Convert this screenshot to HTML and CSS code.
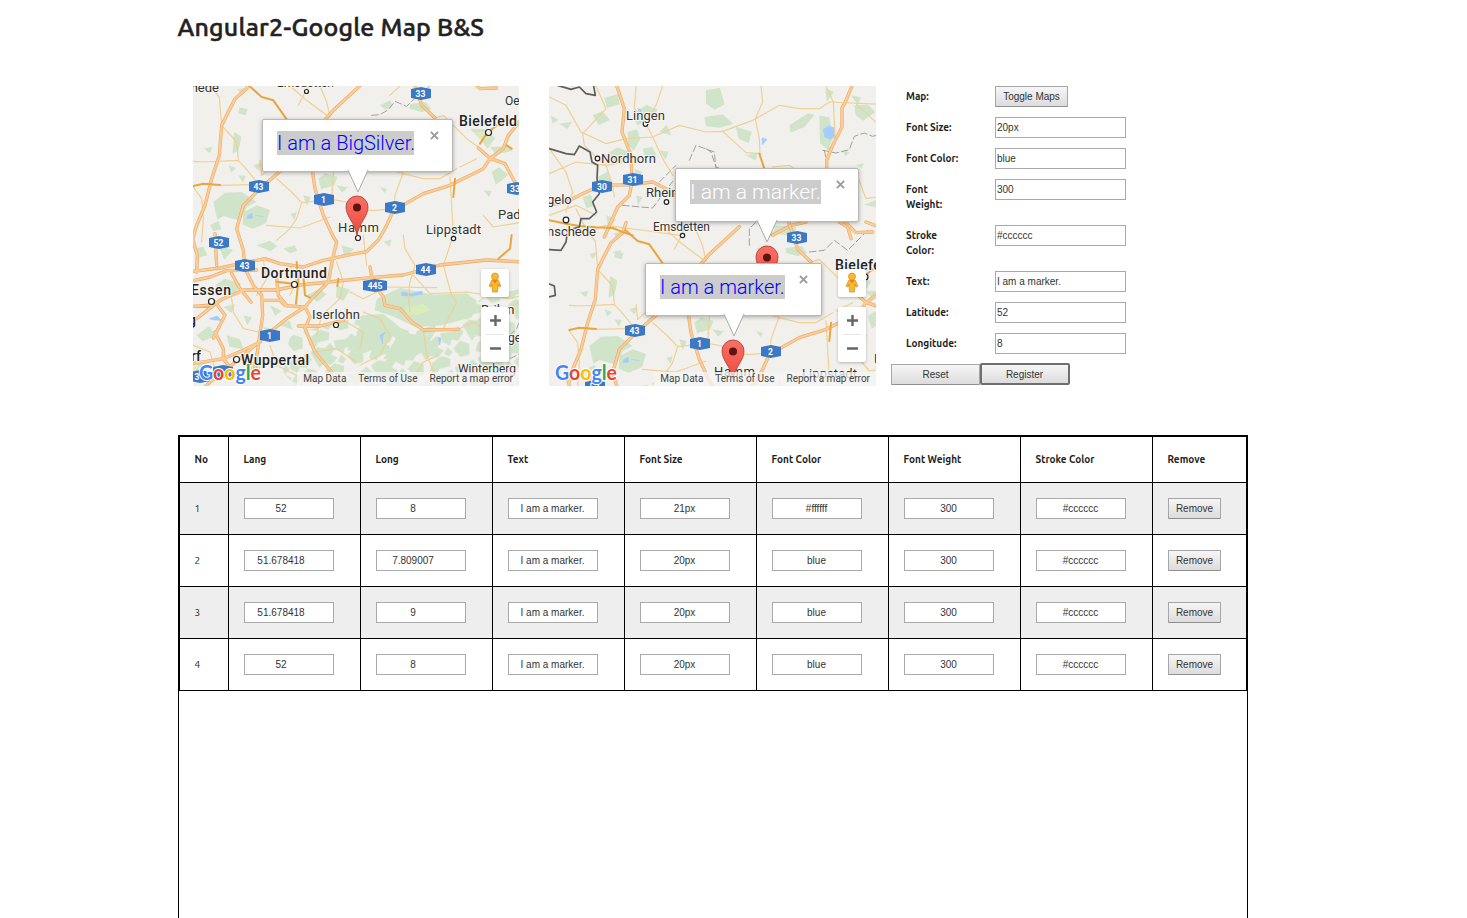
FILE: index.html
```html
<!DOCTYPE html>
<html lang="en">
<head>
<meta charset="utf-8">
<title>Angular2-Google Map B&amp;S</title>
<link rel="stylesheet" href="styles.css">
</head>
<body>
<div class="page">
<h1 class="title">Angular2-Google Map B&amp;S</h1>

<div class="top-row">
<div class="map">
<svg class="map-canvas" viewBox="0 0 327 300">
<defs>
<pattern id="woods" width="150" height="110" patternUnits="userSpaceOnUse" patternTransform="rotate(-24)">
<path d="M0 8l26-6 18 12 22-8 6 22-18 10 14 18-26 12-16-14-20 8zM78 4l34 10 24-8 10 22-26 18-18-10-12 14-16-20zM96 62l28-14 22 20-12 30-28-4zM20 76l34-8 22 18-10 20-32-6-12 10-18-14zM64 66l18-14 8 18-14 8z"/>
</pattern>
<linearGradient id="pin" x1="0" y1="0" x2="0" y2="1"><stop offset="0" stop-color="#fb7066"/><stop offset="1" stop-color="#ee4a3d"/></linearGradient>
<path id="highways" d="M180-10L170 20 135 50 95 130 88 220 65 290 45 370 20 430 8 470M520 2L430 85 270 268 210 320 160 370 140 440 160 505 165 560 190 610 215 640 218 700 205 790 195 860M365 250L375 320 400 400 430 465 440 480 428 530 415 600 370 645 345 675 290 710 240 750 200 785 150 830 60 900 30 930M-5 570L90 558 150 545 225 530 270 545 340 555 400 535 480 518 530 509 565 474 590 430 610 385 700 335 780 310 830 285 880 260 900 230 940 200 955 160 1000 105M865 198L900 229 945 245 985 320 1010 350M665-20L695 70 735 108M1000 540L890 534 750 549 640 579 540 587 415 600 330 609 260 624 160 624 90 655 20 710M540 555L548 600 580 645 585 670 630 680 665 720 700 744 805 742M345 675L360 704 345 740 375 810 425 870M325 732L390 732 460 715M5 460L22 520 20 570M75 455L80 550M0 598L60 585 110 566 200 564M-5 674L70 669 100 650 160 624M75 660L105 700 70 768M75 750L100 800 100 830 150 895M10 845L100 830 160 805 210 780M215 655L270 655 285 671 345 675M125 575L150 620 183 660M260 590L265 640 290 670M840-10L870 20 920 18"/>
<path id="north" d="M205-10L235 80 228 150 255 220 258 300 250 340 215 375 175 465M-5 372L60 360 110 335 165 310 255 308 320 300 360 320 400 350M925-5L898 60 888 78 888 135 860 190 842 235 842 265M760 12M680 460L735 430 780 420M880 420L905 435 915 470M960 420L1000 435 1050 434"/>
<path id="local" d="M60 12L88 45 95 130 140 180 145 235 40 240 10 238M145 235L170 262 200 300M300 12L350 55 410 100M325 70L355 12M390 12L410 60 420 105M210 235L215 280 260 240M90 310L180 308M260 290L305 330 335 362 320 410 300 440 260 475M335 362L425 352 430 270M425 352L470 360 500 355M10 315L35 350 40 410 35 480M230 430L330 438 420 405M640 270L615 340 612 380 550 386 510 382M800 260L750 290 700 290 620 270M780 285L785 370 790 460 760 550 785 640M865 195L830 170 760 100 735 108M860 230L810 255M640 459L645 500 675 550 660 600 655 640 660 690M520 460L530 550M590 615L740 617M670 580L720 635 830 630 960 650 995 640M520 690L570 710 600 760 570 820 510 850M480 630L520 650 560 630M700 745L710 820 745 900M805 742L850 720 880 740 920 690 995 660M660 910L700 840 745 820M785 640L800 660 760 740M440 540L460 600 450 650 395 700 380 760M300 550L320 600 300 640M220 535L230 590 200 640M120 610L130 690 160 740 205 750M10 790L60 810 80 880M240 790L260 850 340 890 330 920M375 810L440 800 500 840M460 715L520 750 510 800M880 400L910 435 1000 420M630 12L600 40"/>
<path id="local-north" d="M10 45L60 70 105 150 180 185 240 170 320 165 400 130 480 150 530 148 620 115 700 70 760 80 820 80 850 60 1020 68M270 12L265 80 300 125 320 165 350 230 380 280M350 12L330 70 300 125M150 12L180 80 110 155 115 190 150 225 180 250 200 310 205 345M10 275L90 240 180 250 240 240M530 148L600 212 645 215M645 12L650 60 628 110 640 170 642 220M840 12L862 60 868 180 835 215M930 65L1000 130M10 200L60 270 80 330 60 390M10 400L90 370 150 400M90 380L120 440M820 260L930 270 960 350 1020 340M680 255L730 250 760 270M100 460L180 430 330 450 400 460"/>
<path id="amber" d="M178 12L215 45 250 55 290 112M10 312L40 305 90 309M795 290L790 345M870 185L890 155 920 130M950 190L965 200M965 459L960 500 925 530M320 540L325 600 318 665M340 580L345 640 360 647M445 590L442 612M260 599L310 605"/>
<g id="terrain">
<g class="wood">
<path d="M28 12l28 4-14 18zM142 22l20-4-8 20zM148 76l25 6-6 18-22-6zM132 150l22 14-8 40-18 12zM42 200l26-6-8 20zM116 250l22 8-14 14zM190 250l24-8-8 24zM145 280l22 2-8 20zM70 360l35-28 50-2 45 30-30 16-20 40-50-14-18 12zM160 390l40-20 40 14-12 40-40 16-30-12zM385 290l20-16 38 10-10 26-40 12zM440 310l34 6-18 16zM60 430l26-14 8 26-24 6zM340 340l22 6-12 26zM300 395l20-4-6 22zM570 70l30-15 8 18-22 10zM660 66l48-6 16 22-30 8-35-10zM840 140l45 2 30 26-22 32-18-24zM900 195l55-2 12 14-50 10zM905 270l22-14 28 22-18 16-20 14zM570 315l22 6-8 12zM880 325l25 2-8 18zM580 480l24-8-4 22zM320 240l20-5-8 18z"/>
<path d="M10 500l30-6 12 26-30 8zM85 490l44 14-26 30zM200 490l40-14 22 16-20 16zM75 610l28-20 50 14-18 30-30-4zM20 760l38-28 18 30-38 16zM100 675l35-8-10 26zM160 700l26 6-14 24zM240 670l35 16-20 16zM215 735l40 6-8 20zM270 730l28-15 10 28zM350 640l38-20 22 16-28 24zM440 610l40 14-20 32-22-10zM280 500l34-10 8 16-22 8zM455 490l38 12-30 22zM110 760l40 12 10 30-42-8zM20 830l32 14-26 22zM170 850l28-18 18 26-34 14z"/>
<path d="M560 650l70-32 100 20 100-4 30 22-14 50-90 24-80 6-60-30-62-22zM520 700l60-4 50 40-38 48-70 30-50-10 30-50zM630 750l70 12 34-8-42 60-60 26-52-10z"/>
</g>
<path fill="url(#woods)" d="M300 760l120-35 100-25 150 50 120-40 100-70 110-20v310H330l-50-60z"/>
<path class="meadow" d="M645 675l55-10 25 20-45 15-30-6zM850 150l40 0 14 16-30 10zM10 850l30 10-4 20-28-4z"/>
</g>
<g id="terrain-north" class="wood">
<path d="M30-4l70 0-20 20zM175 48l40-12 6 30-38 12zM140 100l30-12 22 26-34 16zM260 95l42-26 34 14-28 28-34 20zM245 150l28-8 10 30-20 34-18-20zM175 220l40-24 40 16-16 30-58-4zM40 125l38-6-14 22zM14 100l24 14-18 10zM290 200l28-6 14 26-34 8zM340 150l22-22 14 32zM155 285l30-16 12 36-34 6zM265 260l24 10-16 24zM340 205l28 4-10 24zM110 345l25-8 10 36-24 6zM270 340l20 6-14 24zM180 400l30 12-22 30zM480 25l42-8 14 50-30 16-26-18zM475 105l55-8 32 28-40 12-42-4zM570 135l48 14-10 34-30-12zM730 130l56-36 20 4-30 36-42 18zM838 18l26 12-22 30zM915 40l30 6-10 22zM925 70l40-2 24 22-38 26-22-16zM820 100l30 6 12 60-16 38-24-20zM600 220l34-6-4 22zM890 205l20 6-12 12zM930 250l24-6-8 14zM955 368l40-16-6 24zM680 430l70 5-6 26-50-4zM130 515l25-4-14 20zM200 510l26-6-8 16z"/>
</g>
<path id="water" d="M172 402l14-8 2 14-16 2zM195 400l25 4M175 356l12-2M635 630l32 5 28-8 2 9-30 6-32-1zM570 760l18-10-10 12 0 24zM745 765l8 4-4 20zM58 710l24-8 16 18-14-6-12 0z"/>
</defs>
<g transform="translate(-3 -4) scale(.33333)">
<use href="#terrain"/><use href="#water" class="water"/>
<path class="frontier" d="M545 100l25-2 25-15 20-25 35 15 20-20 35-25 15-18M960 760l20-20 12-30M960 830l30-15"/>
<use href="#local" class="local"/>
<use href="#highways" class="highway-edge"/><use href="#highways" class="highway"/>
<use href="#amber" class="amber"/>
</g>
<g transform="translate(-193 -86)">
<g class="shields">
<path d="M411 89l10-2 10 2v9l-10 2-10-2zM249 182l10-2 10 2v9l-10 2-10-2zM314 195l10-2 10 2v9l-10 2-10-2zM385 203l10-2 10 2v9l-10 2-10-2zM507 184l10-2 10 2v9l-10 2-10-2zM209 238l10-2 10 2v9l-10 2-10-2zM235 261l10-2 10 2v9l-10 2-10-2zM416 265l10-2 10 2v9l-10 2-10-2zM363 281l12-2 12 2v9l-12 2-12-2zM260 331l10-2 10 2v9l-10 2-10-2zM190 372l10-2 10 2v9l-10 2-10-2zM213 367l10-2 10 2v9l-10 2-10-2z"/>
<text x="420.500" y="97">33</text><text x="258.500" y="190">43</text><text x="323.500" y="203">1</text><text x="394.500" y="211">2</text><text x="515" y="192">33</text><text x="218.500" y="246">52</text><text x="244.500" y="269">43</text><text x="425.500" y="273">44</text><text x="375" y="289">445</text><text x="269.500" y="339">1</text><text x="197" y="380">3</text>
</g>
<g class="towns">
<circle cx="306.500" cy="91.500" r="2"/><circle cx="488.500" cy="132.500" r="3"/><circle cx="358" cy="238" r="2.500"/><circle cx="453.500" cy="238.500" r="2.200"/><circle cx="294.500" cy="284.500" r="3"/><circle cx="211.500" cy="301.500" r="3"/><circle cx="336" cy="325" r="2.500"/><circle cx="236.500" cy="359.500" r="3"/>
</g>
<g class="labels">
<text x="219" y="92" text-anchor="end" font-size="13">Enschede</text>
<text x="277" y="87" font-size="12" textLength="57">Emsdetten</text>
<text x="505" y="105" font-size="12">Oe</text>
<text class="city" x="459" y="126" textLength="58">Bielefeld</text>
<text x="338" y="232" font-size="13" textLength="41">Hamm</text>
<text x="426" y="234" font-size="13" textLength="55">Lippstadt</text>
<text x="498" y="219" font-size="13">Pad</text>
<text class="city" x="261" y="278" textLength="66">Dortmund</text>
<text class="city" x="191" y="295" textLength="40">Essen</text>
<text class="city" x="188" y="325">g</text>
<text x="312" y="319" font-size="13" textLength="48">Iserlohn</text>
<text class="city" x="241" y="365" textLength="68">Wuppertal</text>
<text x="191" y="361" class="city">rf</text>
<text x="481" y="314" font-size="13">Brilon</text>
<text x="508" y="342" font-size="12">ge</text>
<text x="458" y="373" font-size="12" textLength="58">Winterberg</text>
</g>
<path class="pin" d="M357 236C355 222 346 217 346 207a11 11 0 0 1 22 0C368 217 359 222 357 236z"/><circle class="pin-dot" cx="357" cy="207.500" r="4"/>
</g>
</svg>
<div class="bubble bubble-silver"><span class="caption">I am a BigSilver.</span><svg class="tail" viewBox="0 0 22 23"><path d="M1 0L11 22 21 0"/></svg><svg class="close" viewBox="0 0 10 10"><path d="M1 1l8 8M9 1L1 9"/></svg></div>
<div class="controls">
<div class="pegman"><svg viewBox="0 0 14 22"><path d="M4 8h6l3 6-2 1-1-3-.5 8H4.500L4 12l-1 3-2-1z"/><circle cx="7" cy="4.500" r="3.500"/><path class="scarf" d="M4.500 8h5L7 11.500z"/></svg></div>
<div class="zoom"><svg viewBox="0 0 28 55"><path class="rule" d="M5 27.500h18"/><path class="sign" d="M9 13.500h11M14.500 8v11M9 41.500h11"/></svg></div>
</div>
<svg class="logo" viewBox="0 0 70 24"><text x="3" y="19" textLength="62" lengthAdjust="spacingAndGlyphs"><tspan fill="#4285f4">G</tspan><tspan fill="#ea4335">o</tspan><tspan fill="#fbbc05">o</tspan><tspan fill="#4285f4">g</tspan><tspan fill="#34a853">l</tspan><tspan fill="#ea4335">e</tspan></text></svg>
<div class="legal"><span>Map Data</span><span>Terms of Use</span><span>Report a map error</span></div>
</div>

<div class="map">
<svg class="map-canvas" viewBox="0 0 327 300">
<g transform="translate(-3 -4) scale(.33333)">
<use href="#terrain-north"/>
<g transform="translate(60 432)"><use href="#terrain"/><use href="#water" class="water"/></g>
<path class="water" d="M832 142l16-10 18 6 0 26-14 8-16-8zM648 168l15 4-14 16zM275 80l10 2-2 8z"/>
<path class="frontier" d="M340 300l50-50M430 235l20-45 55 20 5 50M230 370l90 8 60-80M830 205l40 8 40-10 15-40 30-10 25 10 30-8M835 205l10 50M480 200l15 10 15 45 20 8M610 490l0-50 20-20M790 510l45-5 30-30 40 30 60-60"/>
<use href="#local-north" class="local"/>
<use href="#local" class="local" x="60" y="432"/>
<use href="#north" class="highway-edge"/><use href="#north" class="highway"/>
<use href="#highways" class="highway-edge" x="60" y="432"/><use href="#highways" class="highway" x="60" y="432"/>
<use href="#amber" class="amber" x="60" y="432"/>
<path class="amber" d="M10 415L60 425 100 432 150 436 200 438 230 450 260 460M640 215L655 260"/>
<path class="border" d="M35 10L75 22 100 15 120 35 148 40 143 12M10 200L60 215 85 218 100 192 132 210 138 240 155 250 153 290 160 335 140 360 152 390 130 410 105 410 100 435 65 445 60 480 45 505 10 503M8 605L25 612 28 640 8 645"/>
</g>
<g transform="translate(-549 -86)">
<g class="shields">
<path d="M592 182l10-2 10 2v9l-10 2-10-2zM623 175l10-2 10 2v9l-10 2-10-2zM787 233l10-2 10 2v9l-10 2-10-2zM625 326l10-2 10 2v9l-10 2-10-2zM690 339l10-2 10 2v9l-10 2-10-2zM761 347l10-2 10 2v9l-10 2-10-2zM585 382l10-2 10 2v9l-10 2-10-2z"/>
<text x="602" y="190">30</text><text x="632.500" y="183">31</text><text x="796.500" y="241">33</text><text x="634.500" y="334">43</text><text x="699.500" y="347">1</text><text x="770.500" y="355">2</text><text x="594.500" y="390">52</text>
</g>
<g class="towns"><circle cx="645.500" cy="124" r="2.300"/><circle cx="597.500" cy="158.500" r="2.300"/><circle cx="666.500" cy="202" r="2.300"/><circle cx="566" cy="220" r="2.800"/><circle cx="682.500" cy="235.500" r="2.200"/><circle cx="865" cy="277" r="3"/></g>
<g class="labels">
<text x="626" y="120" font-size="13" textLength="39">Lingen</text>
<text x="601" y="163" font-size="13" textLength="55">Nordhorn</text>
<text x="646" y="197" font-size="13">Rheine</text>
<text x="547" y="204" font-size="13">gelo</text>
<text x="596" y="236" font-size="13" text-anchor="end">Enschede</text>
<text x="653" y="231" font-size="12" textLength="57">Emsdetten</text>
<text class="city" x="835" y="270" textLength="58">Bielefeld</text>
<text x="714" y="376" font-size="13" textLength="41">Hamm</text>
<text x="802" y="378" font-size="13" textLength="55">Lippstadt</text>
<text x="874" y="363" font-size="13">Pad</text>
</g>
<path class="pin" d="M767 286C765 272 756 267 756 257a11 11 0 0 1 22 0C778 267 769 272 767 286z"/><circle class="pin-dot" cx="767" cy="257.500" r="4"/>
<path class="pin" d="M733 380C731 366 722 361 722 351a11 11 0 0 1 22 0C744 361 735 366 733 380z"/><circle class="pin-dot" cx="733" cy="351.500" r="4"/>
</g>
</svg>
<div class="bubble bubble-white"><span class="caption">I am a marker.</span><svg class="tail" viewBox="0 0 22 23"><path d="M1 0L11 22 21 0"/></svg><svg class="close" viewBox="0 0 10 10"><path d="M1 1l8 8M9 1L1 9"/></svg></div>
<div class="bubble bubble-blue"><span class="caption">I am a marker.</span><svg class="tail" viewBox="0 0 22 23"><path d="M1 0L11 22 21 0"/></svg><svg class="close" viewBox="0 0 10 10"><path d="M1 1l8 8M9 1L1 9"/></svg></div>
<div class="controls">
<div class="pegman"><svg viewBox="0 0 14 22"><path d="M4 8h6l3 6-2 1-1-3-.5 8H4.500L4 12l-1 3-2-1z"/><circle cx="7" cy="4.500" r="3.500"/><path class="scarf" d="M4.500 8h5L7 11.500z"/></svg></div>
<div class="zoom"><svg viewBox="0 0 28 55"><path class="rule" d="M5 27.500h18"/><path class="sign" d="M9 13.500h11M14.500 8v11M9 41.500h11"/></svg></div>
</div>
<svg class="logo" viewBox="0 0 70 24"><text x="3" y="19" textLength="62" lengthAdjust="spacingAndGlyphs"><tspan fill="#4285f4">G</tspan><tspan fill="#ea4335">o</tspan><tspan fill="#fbbc05">o</tspan><tspan fill="#4285f4">g</tspan><tspan fill="#34a853">l</tspan><tspan fill="#ea4335">e</tspan></text></svg>
<div class="legal"><span>Map Data</span><span>Terms of Use</span><span>Report a map error</span></div>
</div>

<form class="settings">
<div class="field"><label>Map:</label><button type="button" class="btn toggle">Toggle Maps</button></div>
<div class="field"><label>Font Size:</label><input value="20px"></div>
<div class="field"><label>Font Color:</label><input value="blue"></div>
<div class="field"><label>Font<br>Weight:</label><input value="300"></div>
<div class="field"><label>Stroke<br>Color:</label><input value="#cccccc"></div>
<div class="field"><label>Text:</label><input value="I am a marker."></div>
<div class="field"><label>Latitude:</label><input value="52"></div>
<div class="field"><label>Longitude:</label><input value="8"></div>
<div class="actions"><button type="button" class="btn">Reset</button><button type="button" class="btn focused">Register</button></div>
</form>
</div>

<div class="list">
<table class="markers">
<colgroup><col class="c-no"><col class="c-data" span="7"><col class="c-remove"></colgroup>
<thead><tr><th>No</th><th>Lang</th><th>Long</th><th>Text</th><th>Font Size</th><th>Font Color</th><th>Font Weight</th><th>Stroke Color</th><th>Remove</th></tr></thead>
<tbody>
<tr><td>1</td><td><input class="num" value="52"></td><td><input class="num" value="8"></td><td><input value="I am a marker."></td><td><input value="21px"></td><td><input value="#ffffff"></td><td><input value="300"></td><td><input value="#cccccc"></td><td><button class="btn">Remove</button></td></tr>
<tr><td>2</td><td><input class="num" value="51.678418"></td><td><input class="num" value="7.809007"></td><td><input value="I am a marker."></td><td><input value="20px"></td><td><input value="blue"></td><td><input value="300"></td><td><input value="#cccccc"></td><td><button class="btn">Remove</button></td></tr>
<tr><td>3</td><td><input class="num" value="51.678418"></td><td><input class="num" value="9"></td><td><input value="I am a marker."></td><td><input value="20px"></td><td><input value="blue"></td><td><input value="300"></td><td><input value="#cccccc"></td><td><button class="btn">Remove</button></td></tr>
<tr><td>4</td><td><input class="num" value="52"></td><td><input class="num" value="8"></td><td><input value="I am a marker."></td><td><input value="20px"></td><td><input value="blue"></td><td><input value="300"></td><td><input value="#cccccc"></td><td><button class="btn">Remove</button></td></tr>
</tbody>
</table>
</div>
</div>
</body>
</html>
```

FILE: styles.css
```css
* { box-sizing: border-box; }
body {
  margin: 0;
  height: 918px;
  overflow: hidden;
  background: #fff;
  color: #222;
  font: 10px/15px Ubuntu, "Noto Sans", sans-serif;
}
.page {
  width: 1070px;
  height: 918px;
  margin-left: 178px;
  display: flex;
  flex-direction: column;
}
.title {
  margin: 9px 0 0 -.5px;
  height: 77px;
  flex: none;
  font-size: 25px;
  line-height: 36px;
  font-weight: 500;
  letter-spacing: .18px;
  -webkit-text-stroke: .5px #222;
  white-space: nowrap;
}
.top-row {
  height: 349px;
  flex: none;
  display: flex;
  padding-left: 15px;
}
.map {
  position: relative;
  width: 326px;
  height: 300px;
  margin-right: 30px;
  flex: none;
  overflow: hidden;
  background: #f2f0ec;
  font-family: Roboto, sans-serif;
}
.map + .map { width: 327px; margin-right: 15px; }
.map-canvas { display: block; width: 327px; height: 300px; }

.wood { fill: #d0e4c9; }
#woods path { fill: #d0e4c9; }
.meadow { fill: #dcebbb; }
.water { fill: #a3ccff; stroke: #a3ccff; stroke-width: 2; }
.local, .amber, .highway, .highway-edge, .border, .frontier { fill: none; stroke-linejoin: round; stroke-linecap: round; }
.local { stroke: #eed193; stroke-width: 3.600; }
.amber { stroke: #e9a63c; stroke-width: 6; }
.highway-edge { stroke: #e5ab70; stroke-width: 10; }
.highway { stroke: #fecb90; stroke-width: 6.500; }
.border { stroke: #5d5d5d; stroke-width: 5; }
.frontier { stroke: #a0a0a0; stroke-width: 3; stroke-dasharray: 20 9; }
.shields path { fill: #3b78c6; }
.shields text { fill: #fff; font-size: 8.500px; font-weight: 700; text-anchor: middle; }
.towns circle { fill: #fff; stroke: #222; stroke-width: 1.200; }
.labels text { fill: #333; stroke: #f7f5f1; stroke-width: 2; paint-order: stroke; stroke-linejoin: round; }
.labels .city { font-size: 14px; font-weight: 500; fill: #222; }
.pin { fill: url(#pin); stroke: #a83a32; stroke-width: .8; }
.pin-dot { fill: #5c1510; }

.bubble {
  position: absolute;
  background: #fff;
  border: 1px solid #b8b8b8;
  border-radius: 2px;
  box-shadow: 0 1px 4px rgba(0, 0, 0, .3);
}
.caption {
  position: absolute;
  left: 14px;
  top: 11px;
  height: 24px;
  line-height: 24px;
  font-size: 20px;
  font-weight: 300;
  background: #ccc;
  color: #00f;
  white-space: nowrap;
}
.bubble-silver { left: 69px; top: 33px; width: 191px; height: 53px; }
.bubble-silver .caption { width: 137px; }
.bubble-silver .tail { left: 84px; }
.bubble-white { left: 126px; top: 82px; width: 184px; height: 54px; }
.bubble-white .caption { font-size: 21px; color: #fff; width: 131px; }
.bubble-white .tail { left: 80px; }
.bubble-blue { left: 96px; top: 177px; width: 177px; height: 53px; }
.bubble-blue .caption { width: 125px; }
.bubble-blue .tail { left: 77px; }
.tail { position: absolute; top: calc(100% - 1px); width: 22px; height: 23px; }
.tail path { fill: #fff; stroke: #aaa; stroke-width: 1; }
.close { position: absolute; right: 13px; top: 11px; width: 9px; height: 9px; }
.close path { stroke: #999; stroke-width: 2; }

.controls {
  position: absolute;
  right: 10px;
  top: 183px;
  display: flex;
  flex-direction: column;
  gap: 10px;
}
.pegman, .zoom {
  width: 28px;
  background: #fff;
  border-radius: 2px;
  box-shadow: 0 1px 3px rgba(0, 0, 0, .25);
}
.pegman { height: 28px; padding: 3px 7px; }
.pegman svg { display: block; width: 14px; height: 22px; fill: #fbb829; stroke: #c98d2c; stroke-width: .7; }
.pegman .scarf { fill: #ef7d1c; stroke: none; }
.zoom { height: 55px; }
.zoom svg { display: block; }
.rule { stroke: #e6e6e6; }
.sign { stroke: #666; stroke-width: 2.400; }
.logo { position: absolute; left: 3px; top: 275px; width: 70px; height: 24px; overflow: visible; }
.logo text { font: 700 21px Lato, sans-serif; stroke: #fff; stroke-width: 2; paint-order: stroke; }
.legal {
  position: absolute;
  right: 0;
  bottom: 0;
  height: 14px;
  display: flex;
  gap: 12px;
  padding: 0 6px;
  background: rgba(245, 245, 245, .75);
  color: #444;
  font-size: 10px;
  line-height: 14px;
  white-space: nowrap;
}

.settings { width: 357px; }
.field { display: flex; align-items: flex-start; padding-left: 15px; margin-bottom: 10px; }
.field label { width: 89px; padding: 3px 0; font-weight: 700; line-height: 15px; }
.field input { width: 131px; }
input {
  display: block;
  height: 21px;
  padding: 0 1px;
  border: 1px solid #a9a9a9;
  background: #fff;
  color: #333;
  font: 10px "Liberation Sans", sans-serif;
}
.btn {
  display: block;
  height: 21px;
  padding: 0;
  border: 1px solid #a6a6a6;
  border-bottom-color: #909090;
  border-radius: 1px;
  background: linear-gradient(#f6f6f6, #dcdcdc);
  color: #333;
  font: 10px "Liberation Sans", sans-serif;
}
.toggle { width: 73px; }
.actions { display: flex; }
.actions .btn { width: 89px; }
.actions .focused { width: 90px; height: 22px; margin: -1px 0 0 -.5px; border: 2px solid #6e6e6e; border-radius: 2px; }

.list { flex: 1; border: 1px solid #000; border-bottom: 0; }
.markers {
  width: 1068px;
  table-layout: fixed;
  border-collapse: separate;
  border-spacing: 0;
  border: solid #000;
  border-width: 1px 0 0 1px;
}
.c-no { width: 49px; }
.c-data { width: 132px; }
.c-remove { width: 94px; }
th, td {
  padding: 0 0 0 15px;
  border: solid #000;
  border-width: 0 1px 1px 0;
  text-align: left;
}
th { height: 46px; padding-left: 14.500px; font-weight: 700; }
td { height: 52px; }
td:first-child { padding-left: 14.500px; }
td input { width: 90px; padding: 0 2px 0 1px; text-align: center; }
td .num { padding-right: 17px; }
td .btn { width: 53px; }
tbody tr:nth-child(odd) { background: #eee; }
```
